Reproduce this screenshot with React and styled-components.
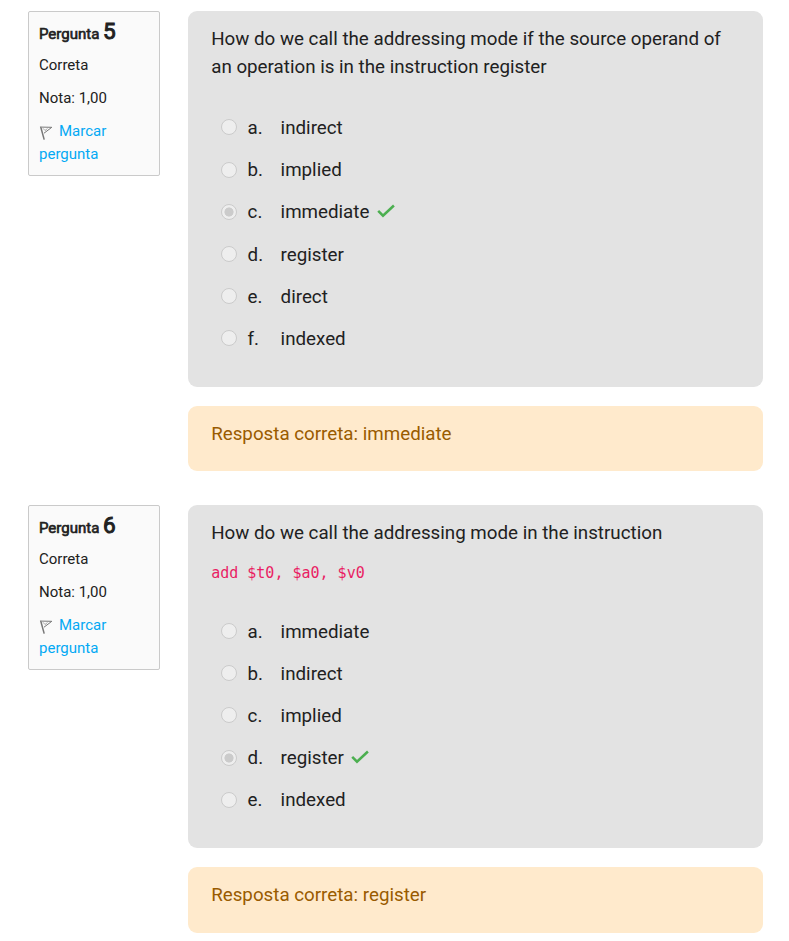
import React from "react";
import styled, { createGlobalStyle } from "styled-components";

const GlobalStyle = createGlobalStyle`
  * { box-sizing: border-box; }
  body { margin: 0; background: #fff; color: #212121; font-family: Roboto, sans-serif; }
`;

const Page = styled.main`
  display: flex;
  flex-direction: column;
  gap: 34px;
  padding: 11px 26px 8px 28px;
`;

const Question = styled.article`
  display: grid;
  grid-template-columns: 132px 575px;
  column-gap: 28px;
  align-items: start;
`;

const InfoCard = styled.aside`
  height: 165px;
  padding: 8px 10px;
  border: 1px solid #cacaca;
  border-radius: 2px;
  background: #fafafa;
  font-size: 15px;
  line-height: 23px;
`;

const QuestionTitle = styled.h3`
  margin: 0;
  height: 24px;
  font-size: 15px;
  font-weight: 400;
  -webkit-text-stroke: 0.65px currentColor;
  line-height: 23px;
  white-space: nowrap;
`;

const QuestionNumber = styled.span`
  font-size: 22.5px;
  -webkit-text-stroke-width: 1px;
`;

const InfoLine = styled.div`
  margin-top: ${({ $gap }) => $gap}px;
`;

const FlagLink = styled.a`
  color: #03a9f4;
  text-decoration: none;
`;

const FlagSvg = styled.svg`
  width: 15px;
  height: 16px;
  margin-right: 5px;
  vertical-align: -5px;
`;

const Content = styled.div`
  display: flex;
  flex-direction: column;
  gap: 19px;
  font-size: 18.75px;
  line-height: 28.125px;
`;

const Formulation = styled.section`
  height: ${({ $height }) => $height}px;
  padding: 14px 23.2px;
  border-radius: 9px;
  background: #e3e3e3;
`;

const Prompt = styled.p`
  margin: 0;
`;

const Code = styled.code`
  display: block;
  margin-top: 12px;
  color: #e91e63;
  font-family: "DejaVu Sans Mono", monospace;
  font-size: 15px;
  line-height: 28px;
`;

const Answers = styled.div`
  display: grid;
  grid-auto-rows: 42.19px;
  margin-top: ${({ $gap }) => $gap}px;
`;

const Answer = styled.label`
  display: grid;
  grid-template-columns: 27px 33px auto;
  justify-content: start;
  align-items: center;
  padding-left: 9.4px;
`;

const Radio = styled.input`
  appearance: none;
  width: 16px;
  height: 16px;
  margin: 0 0 1.5px;
  border: 1px solid #cbcbcb;
  border-radius: 50%;
  background: ${({ checked }) =>
    checked ? "radial-gradient(circle, #cbcbcb 4.2px, #eeeeee 4.9px)" : "#eeeeee"};
`;

const AnswerText = styled.span`
  display: flex;
  align-items: center;
`;

const CheckSvg = styled.svg`
  width: 18px;
  height: 14px;
  margin: 0 0 2.5px 7.4px;
`;

const Outcome = styled.section`
  height: ${({ $height }) => $height}px;
  padding: 14px 23.2px;
  border-radius: 9px;
  background: #ffeacc;
  color: #995b00;
`;

const FlagIcon = () => (
  <FlagSvg viewBox="0 0 15 16" fill="none" stroke="#777" aria-hidden="true">
    <path d="M1.6 1.5 5.2 14.6" strokeWidth="1.5" />
    <path d="M2.5 2.1 12.8 2.3 5 8.2" strokeWidth="1" />
    <path d="M4 3.3 6 5.5 8.5 3.5" strokeWidth="0.6" />
  </FlagSvg>
);

const CheckIcon = () => (
  <CheckSvg viewBox="0 0 18 14" fill="none" stroke="#4caf50" aria-label="Correta">
    <path d="M1.2 6.8 6 11.7 16.9 1.5" strokeWidth="2.5" />
  </CheckSvg>
);

const questions = [
  {
    number: 5,
    prompt:
      "How do we call the addressing mode if the source operand of an operation is in the instruction register",
    answers: ["indirect", "implied", "immediate", "register", "direct", "indexed"],
    correct: "immediate",
    height: 376,
    outcomeHeight: 65,
    answersGap: 25.8,
  },
  {
    number: 6,
    prompt: "How do we call the addressing mode in the instruction",
    code: "add $t0, $a0, $v0",
    answers: ["immediate", "indirect", "implied", "register", "indexed"],
    correct: "register",
    height: 343,
    outcomeHeight: 66,
    answersGap: 23.5,
  },
];

export default function App() {
  return (
    <>
      <GlobalStyle />
      <Page>
        {questions.map((q) => (
          <Question key={q.number}>
            <InfoCard>
              <QuestionTitle>
                Pergunta <QuestionNumber>{q.number}</QuestionNumber>
              </QuestionTitle>
              <InfoLine $gap={10}>Correta</InfoLine>
              <InfoLine $gap={10}>Nota: 1,00</InfoLine>
              <InfoLine $gap={10}>
                <FlagLink>
                  <FlagIcon />
                  Marcar pergunta
                </FlagLink>
              </InfoLine>
            </InfoCard>
            <Content>
              <Formulation $height={q.height}>
                <Prompt>{q.prompt}</Prompt>
                {q.code && <Code>{q.code}</Code>}
                <Answers $gap={q.answersGap}>
                  {q.answers.map((answer, i) => (
                    <Answer key={answer}>
                      <Radio type="radio" disabled readOnly checked={answer === q.correct} />
                      <span>{"abcdef"[i]}.</span>
                      <AnswerText>
                        {answer}
                        {answer === q.correct && <CheckIcon />}
                      </AnswerText>
                    </Answer>
                  ))}
                </Answers>
              </Formulation>
              <Outcome $height={q.outcomeHeight}>Resposta correta: {q.correct}</Outcome>
            </Content>
          </Question>
        ))}
      </Page>
    </>
  );
}
